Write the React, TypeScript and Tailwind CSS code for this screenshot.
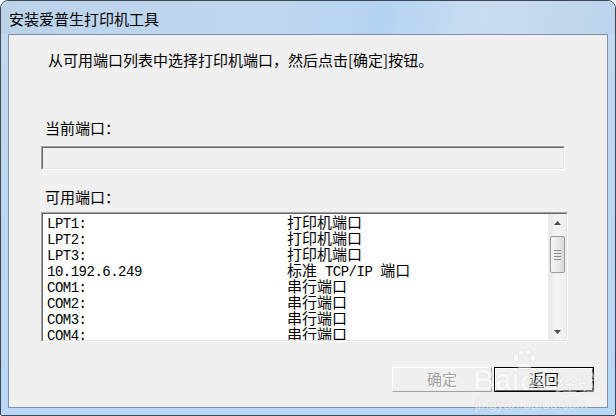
import React from "react";

const cjk = "font-['Noto_Sans_CJK_SC',sans-serif]";
const mono = "font-['Liberation_Mono',monospace] text-[14px] tracking-[-0.5px]";

function Mono({ children }: { children: React.ReactNode }) {
  return <span className={mono}>{children}</span>;
}

export default function App() {
  const rows: [string, React.ReactNode][] = [
    ["LPT1:", "打印机端口"],
    ["LPT2:", "打印机端口"],
    ["LPT3:", "打印机端口"],
    [
      "10.192.6.249",
      <>
        标准<Mono> TCP/IP </Mono>端口
      </>,
    ],
    ["COM1:", "串行端口"],
    ["COM2:", "串行端口"],
    ["COM3:", "串行端口"],
    ["COM4:", "串行端口"],
  ];

  return (
    <div
      className={`relative w-[616px] h-[416px] overflow-hidden rounded-t-[8px] rounded-b-[2px] border border-[#3d4756] bg-[linear-gradient(to_bottom,#c3d9ef,#bcd6f0_60%,#b8d8f6)] flex flex-col text-black ${cjk}`}
    >
      {/* title bar */}
      <div className="h-[33px] shrink-0 pl-[8px] pt-[8px] text-[15px] leading-[20px] bg-[linear-gradient(100deg,#bad2ea_0%,#bfd7ef_45%,#b4d3f1_62%,#c9ddf1_78%,#bcd4ec_100%)]">
        安装爱普生打印机工具
      </div>

      {/* client area */}
      <div className="mx-[7px] h-[374px] shrink-0 border border-[#7f91a8] bg-[#f0f0f0] flex flex-col">
        <div className="mt-[15px] pl-[39px] h-[20px] text-[15px] leading-[20px] whitespace-nowrap">
          从可用端口列表中选择打印机端口，然后点击[确定]按钮。
        </div>

        <div className="mt-[48px] pl-[36px] h-[20px] text-[15px] leading-[20px]">当前端口：</div>

        <div className="mt-[8px] ml-[32px] w-[524px] h-[24px] border border-t-[#a0a0a0] border-l-[#a0a0a0] border-b-white border-r-white">
          <div className="w-full h-full border border-t-[#696969] border-l-[#696969] border-b-[#e3e3e3] border-r-[#e3e3e3] bg-[#f0f0f0]" />
        </div>

        <div className="mt-[17px] pl-[36px] h-[20px] text-[15px] leading-[20px]">可用端口：</div>

        <div className="mt-[5px] ml-[32px] w-[527px] h-[130px] border border-t-[#a0a0a0] border-l-[#a0a0a0] border-b-white border-r-white">
          <div className="w-full h-full border border-t-[#696969] border-l-[#696969] border-b-[#e3e3e3] border-r-[#e3e3e3] bg-white flex">
            <div className="flex-1 overflow-hidden">
              {rows.map(([a, b], i) => (
                <div key={i} className="flex items-baseline h-[16px] leading-[16px] whitespace-nowrap">
                  <div className={`w-[244px] pl-[4px] ${mono}`}>{a}</div>
                  <div className="text-[15px]">{b}</div>
                </div>
              ))}
            </div>
            {/* scrollbar */}
            <div className="w-[18px] h-full flex flex-col bg-[linear-gradient(to_right,#e6e6e6,#f4f4f4_40%,#f0f0f0)] border-l border-[#ececec]">
              <div className="h-[17px] flex items-center justify-center">
                <svg width="7" height="4" viewBox="0 0 7 4">
                  <polygon points="3.5,0 7,4 0,4" fill="#4a4a4a" />
                </svg>
              </div>
              <div className="flex-1 flex flex-col">
                <div className="mt-[5px] h-[37px] mx-[1px] rounded-[2px] border border-[#9a9a9a] bg-[linear-gradient(to_right,#f4f4f4,#e9e9e9_50%,#d8d8d8)] flex flex-col items-center justify-center gap-[2px]">
                  <div className="w-[7px] h-[1px] bg-[#8a8a8a]" />
                  <div className="w-[7px] h-[1px] bg-[#8a8a8a]" />
                  <div className="w-[7px] h-[1px] bg-[#8a8a8a]" />
                  <div className="w-[7px] h-[1px] bg-[#8a8a8a]" />
                </div>
              </div>
              <div className="h-[17px] flex items-center justify-center">
                <svg width="7" height="4" viewBox="0 0 7 4">
                  <polygon points="0,0 7,0 3.5,4" fill="#4a4a4a" />
                </svg>
              </div>
            </div>
          </div>
        </div>

        <div className="mt-[25px] flex justify-end gap-[2px] pr-[13px]">
          <div className="w-[100px] h-[25px] border border-t-white border-l-white border-b-[#a0a0a0] border-r-[#a0a0a0] bg-[#f0f0f0] flex items-center justify-center text-[15px] text-[#a0a0a0] [text-shadow:1px_1px_0_#ffffff]">
            确定
          </div>
          <div className="w-[100px] h-[25px] border border-black">
            <div className="w-full h-full border border-t-white border-l-white border-b-[#696969] border-r-[#696969] bg-[#f0f0f0] flex items-center justify-center text-[15px]">
              <span className="underline underline-offset-2 decoration-1">返</span>回
            </div>
          </div>
        </div>
      </div>

      {/* watermark */}
      <div className="absolute left-[468px] top-[346px] pointer-events-none select-none opacity-50">
        <div className="relative w-[130px] h-[66px]">
          <svg className="absolute left-[42px] top-[2px]" width="26" height="22" viewBox="0 0 26 22">
            <g fill="#ffffff" stroke="#cfcfcf" strokeWidth="0.8">
              <ellipse cx="5" cy="9" rx="3" ry="4" />
              <ellipse cx="10" cy="3.5" rx="3" ry="3.5" />
              <ellipse cx="17" cy="3.5" rx="3" ry="3.5" />
              <ellipse cx="22" cy="9" rx="3" ry="4" />
              <path d="M7 19 C7 12 20 12 20 19 C20 22 7 22 7 19 Z" />
            </g>
          </svg>
          <div className="absolute left-[4px] top-[18px] font-['Liberation_Sans',sans-serif] font-bold text-[30px] leading-[30px] text-white [text-shadow:0_0_1px_#b8b8b8,0_0_1px_#b8b8b8]">
            Bai<span className="text-[26px]">du</span>
          </div>
          <div className={`absolute left-[86px] top-[22px] text-[22px] leading-[24px] text-white [text-shadow:0_0_1px_#b8b8b8,0_0_1px_#b8b8b8] ${cjk}`}>
            经验
          </div>
          <div className="absolute left-[6px] top-[50px] font-['Liberation_Sans',sans-serif] text-[14px] leading-[14px] text-white [text-shadow:0_0_1px_#c0c0c0,0_0_1px_#c0c0c0]">
            jingyan.baidu.com
          </div>
        </div>
      </div>
    </div>
  );
}
